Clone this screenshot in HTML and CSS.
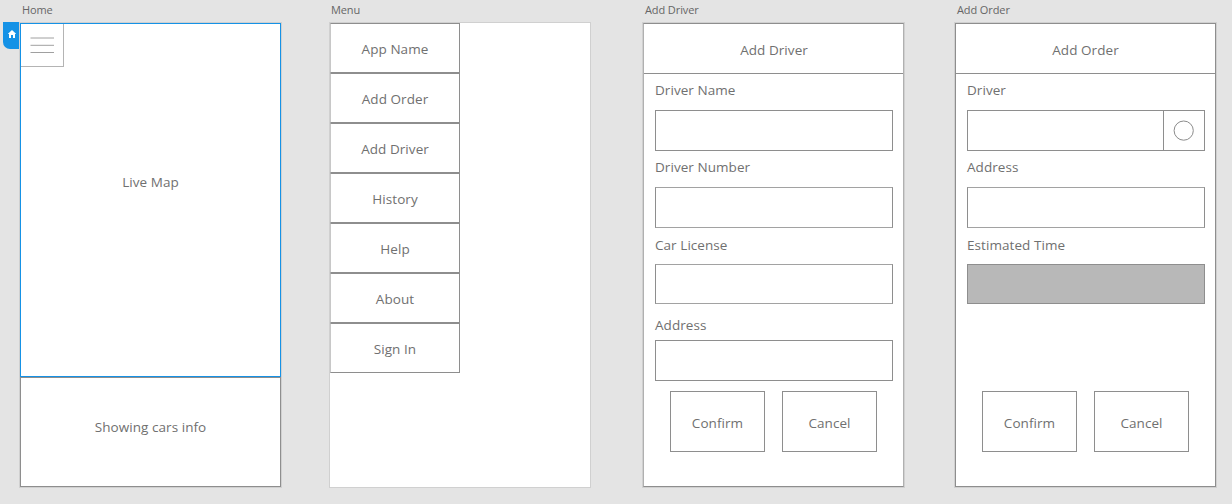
FILE: index.html
```html
<!DOCTYPE html>
<html lang="en">
<head>
<meta charset="utf-8">
<title>Wireframes</title>
<link rel="stylesheet" href="styles.css">
</head>
<body>
<main class="canvas">
  <section class="artboard home">
    <h2 class="title">Home</h2>
    <div class="frame">
      <div class="map">
        <span class="t-map">Live Map</span>
        <div class="burger"><svg width="42" height="42" viewBox="0 0 42 42"><path d="M9.5 15h23.5M9.5 22.3h23.5M9.5 29.5h23.5" stroke="#a0a0a0" fill="none"/></svg></div>
      </div>
      <div class="info"><span class="t-info">Showing cars info</span></div>
      <div class="tag"><svg width="8" height="8" viewBox="0 0 8 8"><path d="M4 0L8.2 4H7v4H5V5H3v3H1V4H-.2z" fill="#fff"/></svg></div>
    </div>
  </section>
  <section class="artboard menu">
    <h2 class="title">Menu</h2>
    <div class="frame">
      <ul class="items">
        <li>App Name</li><li>Add Order</li><li>Add Driver</li><li>History</li><li>Help</li><li>About</li><li>Sign In</li>
      </ul>
    </div>
  </section>
  <section class="artboard driver">
    <h2 class="title">Add Driver</h2>
    <div class="frame">
      <div class="header">Add Driver</div>
      <div class="field"><span class="label">Driver Name</span><div class="input"></div></div>
      <div class="field"><span class="label">Driver Number</span><div class="input soft-y"></div></div>
      <div class="field third"><span class="label">Car License</span><div class="input soft-y"></div></div>
      <div class="field fourth"><span class="label">Address</span><div class="input"></div></div>
      <div class="actions"><div class="button">Confirm</div><div class="button">Cancel</div></div>
    </div>
  </section>
  <section class="artboard order">
    <h2 class="title">Add Order</h2>
    <div class="frame">
      <div class="header">Add Order</div>
      <div class="field"><span class="label">Driver</span><div class="input picker"><div class="pick"><svg width="40" height="39" viewBox="0 0 40 39"><circle cx="19.7" cy="19.6" r="9.6" fill="none" stroke="#8c8c8c"/></svg></div></div></div>
      <div class="field"><span class="label">Address</span><div class="input soft-y"></div></div>
      <div class="field third"><span class="label">Estimated Time</span><div class="input filled"></div></div>
      <div class="field spacer"></div>
      <div class="actions"><div class="button">Confirm</div><div class="button">Cancel</div></div>
    </div>
  </section>
</main>
</body>
</html>
```
FILE: styles.css
```css
* { box-sizing: border-box; }
body {
  margin: 0;
  background: #e4e4e4;
  color: #707070;
  font: 13.5px/20px "Open Sans", "Noto Sans", sans-serif;
  letter-spacing: .06px;
}
.canvas { display: flex; height: 504px; padding-left: 20px; overflow: hidden; }
.artboard { width: 261px; flex: none; }
.menu { width: 260px; margin-left: 49px; }
.driver { margin-left: 53px; }
.order { margin-left: 51px; }
.title {
  height: 23px; margin: 0; padding-left: 2px;
  font-size: 11px; font-weight: 400; line-height: 20px; letter-spacing: -.1px;
  color: #666;
}
.frame {
  position: relative; height: 464px; background: #fff;
  border: 1px solid #8e8e8e; box-shadow: 0 0 0 1px #d0d0d0;
}
svg { display: block; }

/* Home */
.home .frame { border: 0; }
.map {
  position: relative; height: 354px; border: 1px solid #1592e6;
  display: flex; justify-content: center; padding-top: 148px;
}
.burger {
  position: absolute; left: 0; top: 0; width: 43px; height: 43px;
  border: solid #b4b4b4; border-width: 0 1px 1px 0;
}
.burger svg { margin-top: -1px; }
.info {
  height: 110px; border: 1px solid #8e8e8e; padding-top: 39px; text-align: center;
}
.tag {
  position: absolute; left: -17px; top: -1px; width: 16px; height: 27px;
  padding: 8px 0 0 5px; background: #1592e6; border-radius: 0 0 0 7px;
}

/* Menu */
.menu .frame { border: 0; box-shadow: 0 0 0 1px #d0d0d0; }
.menu .title { padding-left: 1px; }
.items { list-style: none; margin: 0; padding: 0; width: 130px; }
.items li {
  height: 50px; border: 1px solid #8e8e8e; border-left-color: #c8c8c8;
  line-height: 50px; text-align: center;
}

/* Forms */
.driver .frame { border-left-color: #b0b0b0; border-right-color: #b0b0b0; }
.header { height: 50px; border-bottom: 1px solid #8e8e8e; line-height: 52px; text-align: center; }
.driver .header { padding-left: 1px; }
.field { height: 77px; padding: 0 10px 0 11px; }
.label { display: block; height: 36px; line-height: 32px; }
.input { height: 41px; border: 1px solid #8e8e8e; }
.soft-y { border-top-color: #a2a2a2; border-bottom-color: #a2a2a2; }
.third .label { line-height: 34px; }
.third .input { height: 40px; }
.fourth .label { line-height: 40px; height: 35px; }
.filled { background: #b8b8b8; }
.picker { display: flex; justify-content: flex-end; }
.pick { width: 41px; border-left: 1px solid #8e8e8e; }
.actions { display: flex; gap: 17px; padding: 9px 0 0 26px; }
.button {
  width: 95px; height: 61px; border: 1px solid #8e8e8e;
  line-height: 62px; text-align: center;
}
```
